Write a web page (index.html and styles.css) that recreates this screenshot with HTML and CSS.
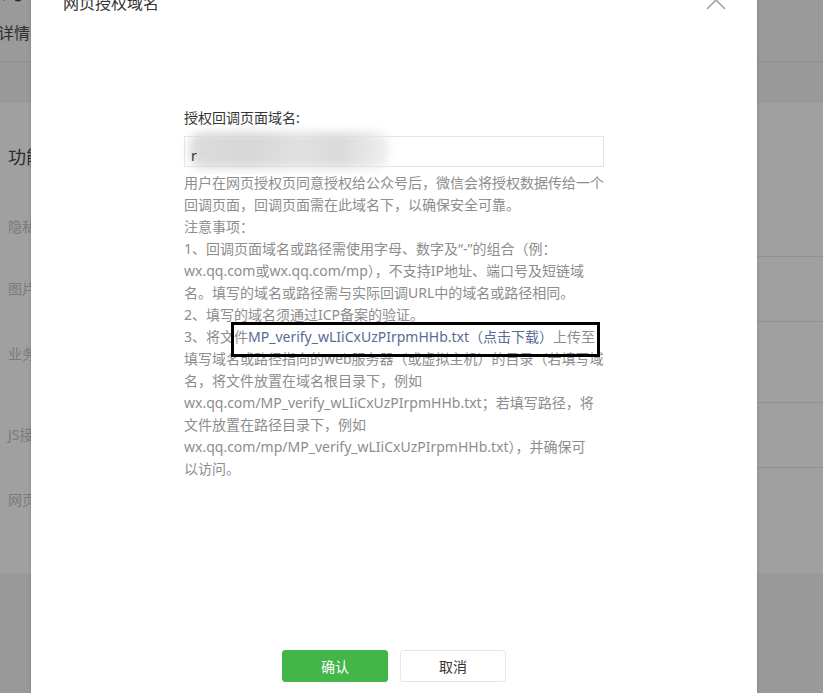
FILE: index.html
```html
<!DOCTYPE html>
<html lang="zh-CN">
<head>
<meta charset="utf-8">
<title>网页授权域名</title>
<link rel="stylesheet" href="styles.css">
</head>
<body>
<div class="page">
  <div class="topbar">
    <div class="brand">公众号</div>
    <div class="tab">详情</div>
  </div>
  <div class="band"></div>
  <div class="panel">
    <div class="panel-title">功能设置</div>
    <div class="row r1"><div class="label">隐私设置</div><div class="cell"></div></div>
    <div class="row r2"><div class="label">图片水印</div><div class="cell"></div></div>
    <div class="row r3"><div class="label">业务域名</div><div class="cell"></div></div>
    <div class="row r4"><div class="label">JS接口安全域名</div><div class="cell"></div></div>
    <div class="row r5"><div class="label">网页授权域名</div><div class="cell"></div></div>
  </div>
  <div class="foot"></div>
</div>

<div class="modal">
  <div class="modal-head">
    <h3 class="modal-title">网页授权域名</h3>
    <span class="close" aria-label="关闭">
      <svg width="20" height="20" viewBox="0 0 20 20"><path d="M1 1 L19 19 M19 1 L1 19" stroke="#a3a3a3" stroke-width="1.6" fill="none"/></svg>
    </span>
  </div>
  <div class="modal-body">
    <div class="form">
      <div class="form-label">授权回调页面域名:</div>
      <div class="input">
        <span class="smudge"></span>
        <span class="input-text">r</span>
      </div>
      <div class="desc">
        <p class="line">用户在网页授权页同意授权给公众号后，微信会将授权数据传给一个</p>
        <p class="line">回调页面，回调页面需在此域名下，以确保安全可靠。</p>
        <p class="line">注意事项：</p>
        <p class="line">1、回调页面域名或路径需使用字母、数字及“-”的组合（例：</p>
        <p class="line">wx.qq.com或wx.qq.com/mp），不支持IP地址、端口号及短链域</p>
        <p class="line">名。填写的域名或路径需与实际回调URL中的域名或路径相同。</p>
        <p class="line">2、填写的域名须通过ICP备案的验证。</p>
        <p class="line">3、将文件<a class="link" href="#">MP_verify_wLIiCxUzPIrpmHHb.txt（点击下载）</a>上传至</p>
        <p class="line">填写域名或路径指向的web服务器（或虚拟主机）的目录（若填写域</p>
        <p class="line">名，将文件放置在域名根目录下，例如</p>
        <p class="line">wx.qq.com/MP_verify_wLIiCxUzPIrpmHHb.txt；若填写路径，将</p>
        <p class="line">文件放置在路径目录下，例如</p>
        <p class="line">wx.qq.com/mp/MP_verify_wLIiCxUzPIrpmHHb.txt），并确保可</p>
        <p class="line">以访问。</p>
        <span class="mark"></span>
      </div>
    </div>
  </div>
  <div class="modal-foot">
    <button class="btn btn-primary">确认</button>
    <button class="btn btn-default">取消</button>
  </div>
</div>
</body>
</html>
```
FILE: styles.css
```css
* { box-sizing: border-box; }
html, body { margin: 0; padding: 0; }
body {
  width: 823px;
  height: 693px;
  overflow: hidden;
  background: #9b9b9b;
  font-family: "Noto Sans", "Noto Sans CJK SC", sans-serif;
  position: relative;
}

/* background page (already dimmed by the mask) */
.page { width: 823px; }
.topbar {
  height: 62px;
  background: #9a9a9a;
  border-bottom: 1px solid #8f8f8f;
  overflow: hidden;
}
.brand {
  margin-top: -17px;
  margin-left: -34px;
  font-size: 20px;
  line-height: 20px;
  color: #2a2a2a;
}
.tab {
  margin-top: 19px;
  margin-left: -2px;
  font-size: 16px;
  line-height: 22px;
  color: #2e2e2e;
}
.band { height: 41px; background: #999999; }
.panel {
  background: #a0a0a0;
  height: 470px;
}
.panel-title {
  padding: 42px 0 26px 8px;
  font-size: 18px;
  line-height: 24px;
  color: #2b2b2b;
}
.row {
  display: grid;
  grid-template-columns: 150px 1fr;
}
.row .label {
  padding: 21px 0 0 8px;
  font-size: 14px;
  line-height: 22px;
  color: #7b7b7b;
  white-space: nowrap;
}
.row .cell { border-bottom: 1px solid #919191; }
.r1 { height: 62px; }
.r2 { height: 65px; }
.r3 { height: 81px; }
.r4 { height: 65px; }
.r5 { height: 105px; }
.r5 .cell { border-bottom: 0; }
.foot { height: 120px; background: #999999; }

/* dialog */
.modal {
  position: absolute;
  left: 31px;
  top: -25px;
  width: 726px;
  height: 760px;
  background: #ffffff;
  box-shadow: 0 0 3px rgba(0,0,0,0.18);
}
.modal-head {
  height: 56px;
  padding: 0 32px;
  position: relative;
}
.modal-title {
  margin: 0;
  font-size: 16px;
  font-weight: normal;
  line-height: 56px;
  color: #353535;
}
.close {
  position: absolute;
  left: 675px;
  top: 15px;
  width: 20px;
  height: 20px;
}
.close svg { display: block; }
.modal-body {
  padding-top: 76px;
  display: flex;
  justify-content: center;
}
.form { width: 420px; }
.form-label {
  font-size: 14px;
  line-height: 22px;
  color: #353535;
}
.input {
  margin-top: 7px;
  height: 31px;
  border: 1px solid #e4e4e4;
  position: relative;
  padding-left: 6px;
  font-size: 14px;
  line-height: 38px;
  color: #333;
}
.input-text { position: relative; }
.smudge {
  position: absolute;
  left: 4px;
  top: -5px;
  width: 200px;
  height: 36px;
  background: linear-gradient(90deg, #d9d9d9 0%, #d2d2d2 30%, #dedede 55%, #d6d6d6 75%, #eeeeee 100%);
  filter: blur(5px);
  border-radius: 14px;
  opacity: 0.9;
}
.desc {
  margin-top: 5px;
  position: relative;
  font-size: 14px;
  line-height: 22px;
  color: #8d8d8d;
}
.line { margin: 0; white-space: nowrap; }
.link { color: #576b95; text-decoration: none; }
.mark {
  position: absolute;
  left: 47px;
  top: 150px;
  width: 369px;
  height: 35px;
  border: 3px solid #000;
}
.modal-foot {
  margin-top: 170px;
  display: flex;
  justify-content: center;
  gap: 12px;
}
.btn {
  width: 106px;
  height: 32px;
  border-radius: 3px;
  font-family: "Noto Sans", "Noto Sans CJK SC", sans-serif;
  font-size: 14px;
  cursor: pointer;
}
.btn-primary {
  background: #44b549;
  border: 1px solid #44b549;
  color: #ffffff;
}
.btn-default {
  background: #ffffff;
  border: 1px solid #e4e8eb;
  color: #353535;
}
```
